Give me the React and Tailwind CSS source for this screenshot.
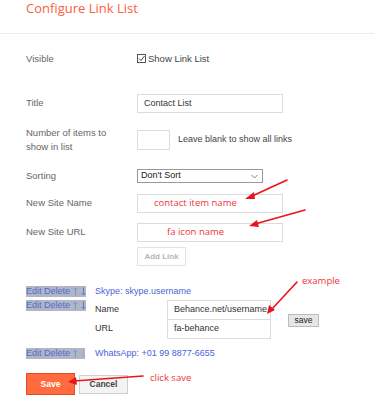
import React from "react";

function Input({ className = "", children }) {
  return (
    <div className={"flex shrink-0 items-center whitespace-nowrap border border-[#dcdcdc] bg-white text-[9px] text-[#333] " + className}>
      {children}
    </div>
  );
}

function Arrow({ up, color }) {
  return (
    <svg width="5" height="9" viewBox="0 0 5 9" className="shrink-0">
      {up ? (
        <path d="M2.5 8.5 V1 M0.5 3 L2.5 1 L4.5 3" fill="none" stroke={color} strokeWidth="1" />
      ) : (
        <path d="M2.5 0.5 V8 M0.5 6 L2.5 8 L4.5 6" fill="none" stroke={color} strokeWidth="1" />
      )}
    </svg>
  );
}

function EditHL({ last = false }) {
  return (
    <div className={"flex h-[11px] shrink-0 items-center whitespace-nowrap bg-[#b1b6c6] text-[9px] leading-[11px] text-[#4f6bd0] " + (last ? "w-[59px]" : "w-[60px]")}>
      <span>Edit Delete</span>
      <span className="ml-[3px] flex">
        <Arrow up color="#7b92dc" />
      </span>
      <span className="ml-[3px] flex">
        <Arrow color={last ? "#a3abc4" : "#5b78d8"} />
      </span>
    </div>
  );
}

export default function App() {
  return (
    <div className="relative h-[400px] w-[374px] overflow-hidden bg-white font-['Liberation_Sans',Arial,sans-serif]">
      <div className="h-[34px] border-b border-[#ececec] pl-[26px]">
        <h1 className="font-['Open_Sans',sans-serif] text-[13px] leading-[16px] text-[#f9603f]">Configure Link List</h1>
      </div>

      <div className="pl-[26px] text-[9.5px] text-[#666]">
        {/* Visible */}
        <div className="mt-[18px] flex h-[14px] items-center">
          <div className="w-[111px] shrink-0">Visible</div>
          <div className="flex items-center text-[#444]">
            <svg width="10" height="10" viewBox="0 0 10 10" className="mr-[1px]">
              <rect x="0.5" y="0.5" width="8" height="8" fill="white" stroke="#555" />
              <path d="M2 4.5 L4 6.5 L7.5 2" fill="none" stroke="#444" strokeWidth="1" />
            </svg>
            <span>Show Link List</span>
          </div>
        </div>

        {/* Title */}
        <div className="mt-[28px] flex h-[19px] items-center">
          <div className="w-[111px] shrink-0">Title</div>
          <Input className="h-[19px] w-[146px] pl-[6px]">Contact List</Input>
        </div>

        {/* Number */}
        <div className="mt-[13px] flex h-[28px] items-center">
          <div className="w-[111px] shrink-0 leading-[14px]">
            Number of items to
            <br />
            show in list
          </div>
          <Input className="h-[20px] w-[33px]" />
          <div className="ml-[8px] text-[9px] text-[#444]">Leave blank to show all links</div>
        </div>

        {/* Sorting */}
        <div className="mt-[15px] flex h-[14px] items-center">
          <div className="w-[111px] shrink-0">Sorting</div>
          <div className="flex h-[14px] w-[126px] items-center justify-between border border-[#999] pl-[3px] pr-[4px] text-[9px] text-[#222]">
            <span>Don't Sort</span>
            <svg width="7" height="5" viewBox="0 0 7 5">
              <path d="M0.5 1 L3.5 4 L6.5 1" fill="none" stroke="#777" strokeWidth="0.9" />
            </svg>
          </div>
        </div>

        {/* New Site Name */}
        <div className="mt-[11px] flex h-[19px] items-center">
          <div className="w-[111px] shrink-0">New Site Name</div>
          <Input className="h-[19px] w-[146px] pl-[16px]">
            <span className="font-['Open_Sans',sans-serif] text-[9.5px] text-[#f0343c]">contact item name</span>
          </Input>
        </div>

        {/* New Site URL */}
        <div className="mt-[10px] flex h-[19px] items-center">
          <div className="w-[111px] shrink-0">New Site URL</div>
          <Input className="h-[19px] w-[146px] pl-[29px]">
            <span className="font-['Open_Sans',sans-serif] text-[9.5px] text-[#f0343c]">fa icon name</span>
          </Input>
        </div>

        {/* Add Link */}
        <div className="mt-[5px] flex">
          <div className="w-[111px] shrink-0" />
          <div className="flex h-[19px] w-[49px] items-center justify-center border border-[#e3e3e3] text-[8px] font-bold text-[#b5b5b5]">
            Add Link
          </div>
        </div>

        {/* Edit rows */}
        <div className="mt-[20px] flex items-center">
          <EditHL />
          <div className="ml-[9px] whitespace-nowrap text-[9px] leading-[11px] text-[#4a63d4]">Skype: skype.username</div>
        </div>

        <div className="mt-[3px] flex items-start">
          <EditHL />
          <div className="ml-[9px] flex items-center">
            <div className="flex flex-col">
              <div className="flex items-center">
                <div className="w-[72px] shrink-0 text-[9px] text-[#333]">Name</div>
                <Input className="h-[20px] w-[104px] overflow-hidden pl-[6px] text-[9px]">Behance.net/username</Input>
              </div>
              <div className="-mt-px flex items-center">
                <div className="w-[72px] shrink-0 text-[9px] text-[#333]">URL</div>
                <Input className="h-[20px] w-[104px] pl-[6px] text-[9px]">fa-behance</Input>
              </div>
            </div>
            <div className="ml-[17px] mt-[2px] flex h-[13px] w-[31px] shrink-0 items-center justify-center border border-[#bbb] bg-[#e6e6e6] text-[8.5px] text-[#222]">
              save
            </div>
          </div>
        </div>

        <div className="mt-[9px] flex items-center">
          <EditHL last />
          <div className="ml-[10px] whitespace-nowrap text-[9px] leading-[11px] text-[#4a63d4]">WhatsApp: +01 99 8877-6655</div>
        </div>

        {/* Buttons */}
        <div className="mt-[14px] flex items-center">
          <div className="flex h-[22px] w-[49px] items-center justify-center border border-[#e24a2b] bg-[#ff6a3f] text-[8.5px] font-bold text-white">
            Save
          </div>
          <div className="ml-[4px] flex h-[19px] w-[49px] items-center justify-center border border-[#cfcfcf] bg-[#f3f3f3] text-[8.5px] font-bold text-[#444]">
            Cancel
          </div>
        </div>
      </div>

      {/* Annotations overlay */}
      <div className="absolute left-[302px] top-[275px] font-['Open_Sans',sans-serif] text-[9.5px] leading-[12px] text-[#f0343c]">example</div>
      <div className="absolute left-[150px] top-[372px] font-['Open_Sans',sans-serif] text-[9.5px] leading-[12px] text-[#f0343c]">click save</div>

      <svg className="pointer-events-none absolute left-0 top-0" width="374" height="400" viewBox="0 0 374 400">
        <g stroke="#e8141b" strokeWidth="1.6" fill="#e8141b" strokeLinecap="round">
          <line x1="287" y1="180" x2="250" y2="197" />
          <polygon points="245,199 254,192 255,199" stroke="none" />
          <line x1="305" y1="210" x2="255" y2="224" />
          <polygon points="249,226 257,220 259,227" stroke="none" />
          <line x1="297" y1="282" x2="272" y2="309" />
          <polygon points="267,314 269,305 275,310" stroke="none" />
          <line x1="143" y1="376" x2="74" y2="381" />
          <polygon points="68,382 76,377 77,385" stroke="none" />
        </g>
      </svg>
    </div>
  );
}
